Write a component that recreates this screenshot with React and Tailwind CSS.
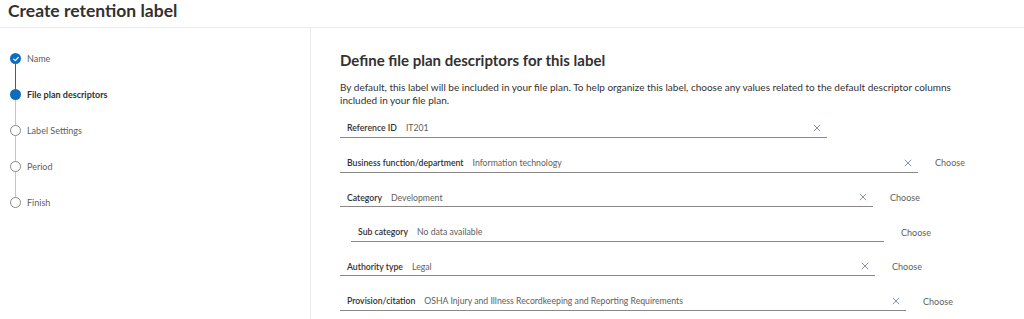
import React from 'react';

const STEPS = [
  { name: 'Name', state: 'done' },
  { name: 'File plan descriptors', state: 'active' },
  { name: 'Label Settings', state: 'todo' },
  { name: 'Period', state: 'todo' },
  { name: 'Finish', state: 'todo' },
];

const FIELDS = [
  { label: 'Reference ID', value: 'IT201', width: 'w-[487px]', clear: true, choose: false },
  { label: 'Business function/department', value: 'Information technology', width: 'w-[578px]', clear: true, choose: true },
  { label: 'Category', value: 'Development', width: 'w-[533px]', clear: true, choose: true },
  { label: 'Sub category', value: 'No data available', width: 'w-[533px]', clear: false, choose: true, indent: true },
  { label: 'Authority type', value: 'Legal', width: 'w-[535px]', clear: true, choose: true },
  { label: 'Provision/citation', value: 'OSHA Injury and Illness Recordkeeping and Reporting Requirements', width: 'w-[566px]', clear: true, choose: true },
];

function StepDot({ state }) {
  if (state === 'done') {
    return (
      <div className="w-[11px] h-[11px] rounded-full bg-[#0f6cbd] flex items-center justify-center">
        <svg viewBox="0 0 12 12" className="w-[8px] h-[8px]">
          <path d="M2.5 6.2 L5 8.5 L9.5 3.5" fill="none" stroke="white" strokeWidth="1.8" strokeLinecap="round" strokeLinejoin="round" />
        </svg>
      </div>
    );
  }
  if (state === 'active') {
    return <div className="w-[11px] h-[11px] rounded-full bg-[#0f6cbd]" />;
  }
  return <div className="w-[11px] h-[11px] rounded-full border-[1.5px] border-[#8a8886] bg-white" />;
}

function ClearIcon() {
  return (
    <svg viewBox="0 0 10 10" className="w-[8px] h-[8px] shrink-0">
      <path d="M1 1 L9 9 M9 1 L1 9" stroke="#6f83ad" strokeWidth="1.1" fill="none" />
    </svg>
  );
}

export default function App() {
  return (
    <div className="w-[1024px] h-[319px] overflow-hidden bg-white text-[#323130]" style={{ fontFamily: 'Lato, "Open Sans", sans-serif' }}>
      {/* Header */}
      <div className="h-[28px] border-b border-[#edebe9] pl-[8px] flex items-center">
        <h1 className="text-[17.5px] font-bold leading-none -mt-[6px]">Create retention label</h1>
      </div>

      <div className="flex h-[291px]">
        {/* Steps */}
        <div className="w-[311px] shrink-0 border-r border-[#edebe9] pt-[25px] pl-[10px]">
          {STEPS.map((step, i) => (
            <div key={step.name}>
              <div className="flex items-center h-[11px] gap-[6px]">
                <StepDot state={step.state} />
                <span className={`text-[9px] leading-none ${step.state === 'active' ? 'font-bold text-[#323130]' : 'text-[#605e5c]'}`}>
                  {step.name}
                </span>
              </div>
              {i < STEPS.length - 1 && (
                <div className={`ml-[5px] w-px h-[25px] ${i === 0 ? 'bg-[#0f6cbd]' : 'bg-[#c8c6c4]'}`} />
              )}
            </div>
          ))}
        </div>

        {/* Form */}
        <div className="flex-1 pl-[29px] pt-[22px]">
          <h2 className="text-[15px] font-bold leading-[20px]">Define file plan descriptors for this label</h2>
          <p className="mt-[11px] text-[10px] leading-[13px] text-[#323130] w-[640px]">
            By default, this label will be included in your file plan. To help organize this label, choose any values related to the default descriptor columns included in your file plan.
          </p>

          <div className="mt-[12px] flex flex-col gap-[15.6px]">
            {FIELDS.map((f) => (
              <div key={f.label} className={`flex items-center ${f.indent ? 'pl-[11px]' : ''}`}>
                <div className={`${f.width} h-[19px] border-b border-[#8a8886] flex items-center pl-[7px] pr-[6px] shrink-0`}>
                  <span className="text-[8.7px] font-semibold text-[#323130] whitespace-nowrap">{f.label}</span>
                  <span className="ml-[9px] text-[8.7px] text-[#605e5c] whitespace-nowrap flex-1">{f.value}</span>
                  {f.clear && <ClearIcon />}
                </div>
                {f.choose && <span className="ml-[17px] text-[9px] text-[#605e5c]">Choose</span>}
              </div>
            ))}
          </div>
        </div>
      </div>
    </div>
  );
}
